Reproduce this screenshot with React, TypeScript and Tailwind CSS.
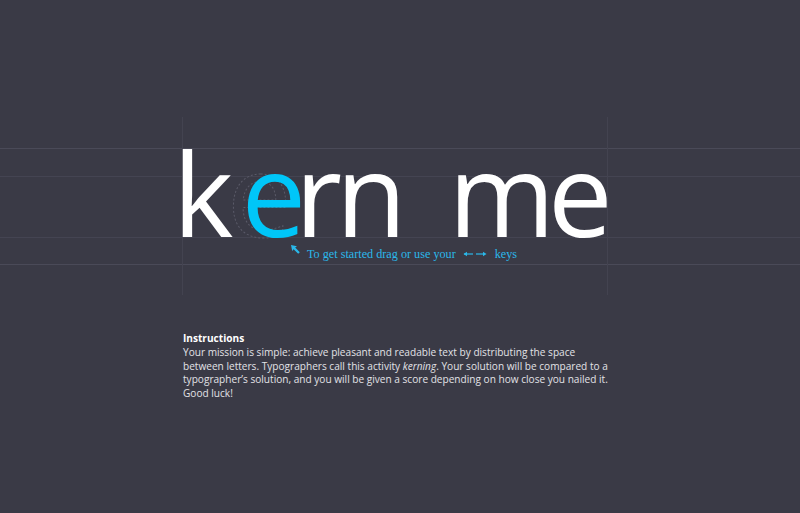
import React from "react";

export default function App() {
  return (
    <div className="relative w-[800px] h-[513px] overflow-hidden bg-[#3a3a46]">
      {/* guide lines */}
      <div className="absolute left-0 right-0 top-[148px] h-px bg-[#4a4a58]" />
      <div className="absolute left-0 right-0 top-[176px] h-px bg-[#444452]" />
      <div className="absolute left-0 right-0 top-[237px] h-px bg-[#444452]" />
      <div className="absolute left-0 right-0 top-[264px] h-px bg-[#4a4a58]" />
      <div className="absolute top-[117px] h-[178px] left-[182px] w-px bg-[#434350]" />
      <div className="absolute top-[117px] h-[178px] left-[607px] w-px bg-[#434350]" />

      {/* ghost e */}
      <svg className="absolute left-[218px] top-[130px]" width="90" height="120" viewBox="0 0 90 120">
        <text
          x="9"
          y="107"
          fontFamily="'Open Sans', sans-serif"
          fontSize="115"
          fill="none"
          stroke="#5a5a68"
          strokeWidth="1"
          strokeDasharray="2 2"
        >
          e
        </text>
      </svg>

      <div className="relative pt-[135px] pl-[173px]">
        <div className="flex text-[115px] leading-none text-white font-['Open_Sans',sans-serif] whitespace-pre">
          <span>k</span>
          <span className="ml-[8px] text-[#00c6f8]">e</span>
          <span className="ml-[-11px]">r</span>
          <span className="ml-[-6px]">n</span>
          <span className="ml-[42px]">m</span>
          <span className="ml-[-7px]">e</span>
        </div>
        <div className="flex items-center mt-[-5px] ml-[117px] text-[#2ab8ea] font-['Liberation_Serif',serif] text-[12.2px]">
          <svg width="11" height="11" viewBox="0 0 11 11" className="mr-[6px] mt-[-10px]">
            <path d="M1 1 L7 2.2 L5.2 3.6 L9.8 8.2 L8.2 9.8 L3.6 5.2 L2.2 7 Z" fill="#2ab8ea" />
          </svg>
          <span>To get started drag or use your</span>
          <svg width="24" height="8" viewBox="0 0 24 8" className="ml-[7px]">
            <path d="M1 4 H10" stroke="#2ab8ea" strokeWidth="1.2" />
            <path d="M0.5 4 L4 1.8 L4 6.2 Z" fill="#2ab8ea" />
            <path d="M13 4 H22" stroke="#2ab8ea" strokeWidth="1.2" />
            <path d="M23.5 4 L20 1.8 L20 6.2 Z" fill="#2ab8ea" />
          </svg>
          <span className="ml-[8px]">keys</span>
        </div>
      </div>

      <div className="absolute left-[183px] top-[332px] text-[10.1px] leading-[13.8px] text-[#e2e2e6] font-['Open_Sans',sans-serif] whitespace-nowrap">
        <div className="font-bold text-white">Instructions</div>
        <p>
          Your mission is simple: achieve pleasant and readable text by distributing the space
          <br />
          between letters. Typographers call this activity <em>kerning</em>. Your solution will be compared to a
          <br />
          typographer’s solution, and you will be given a score depending on how close you nailed it.
          <br />
          Good luck!
        </p>
      </div>
    </div>
  );
}
